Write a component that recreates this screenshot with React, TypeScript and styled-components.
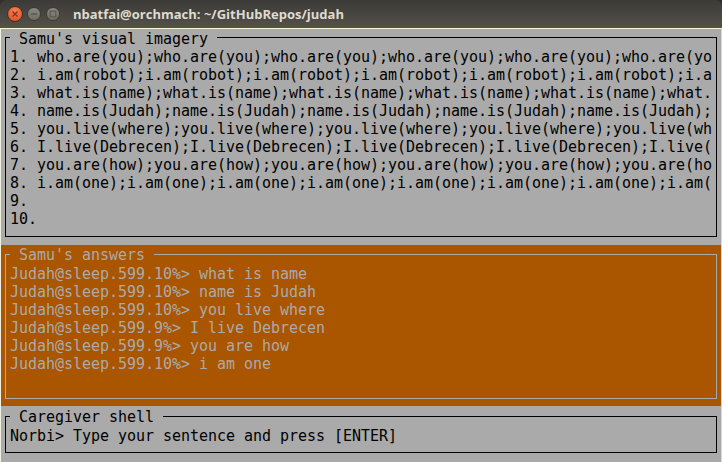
import React from "react";
import styled, { createGlobalStyle } from "styled-components";

const Global = createGlobalStyle`
  html, body { margin: 0; padding: 0; background: #fff; }
  body { width: 722px; height: 462px; overflow: hidden; }
`;

const Win = styled.div`
  width: 722px;
  height: 462px;
  display: flex;
  flex-direction: column;
  background: #2f2e2b;
`;

const TitleBar = styled.div`
  height: 28px;
  flex: none;
  display: flex;
  align-items: center;
  padding-left: 7px;
  gap: 4px;
  background: linear-gradient(#3b3a36, #55524b);
  border-radius: 6px 6px 0 0;
  box-sizing: border-box;
`;

const CloseLight = styled.span`
  width: 16px;
  height: 16px;
  border-radius: 50%;
  box-sizing: border-box;
  display: flex;
  align-items: center;
  justify-content: center;
  background: radial-gradient(circle at 50% 30%, #f4805a, #dc4a20);
  border: 1px solid #47301f;
`;

const GreyLight = styled.span`
  width: 14px;
  height: 14px;
  border-radius: 50%;
  box-sizing: border-box;
  display: flex;
  align-items: center;
  justify-content: center;
  background: linear-gradient(#8a8880, #6f6d66);
  border: 1px solid #3c3b37;

  & + & {
    margin-left: 1px;
  }
`;

const WinTitle = styled.div`
  margin-left: 9px;
  font: 700 13px "Open Sans", "Noto Sans", sans-serif;
  color: #dfdbd2;
  white-space: pre;
`;

const Term = styled.div`
  flex: 1;
  display: flex;
  flex-direction: column;
  border-top: 1px solid #f6f6d8;
  border-left: 1px solid #f0f0e0;
  border-right: 1px solid #d8d8d0;
  font: 15px/18px "DejaVu Sans Mono", monospace;
  letter-spacing: -0.03px;
  min-height: 0;
`;

const Panel = styled.section<{ $h: number; $orange?: boolean; $pt: number }>`
  height: ${(p) => p.$h}px;
  flex: none;
  box-sizing: border-box;
  padding: ${(p) => p.$pt}px 4px 0 4px;
  background: ${(p) => (p.$orange ? "#aa5500" : "#aaaaaa")};
  color: ${(p) => (p.$orange ? "#aaaaaa" : "#000")};
`;

const Frame = styled.div<{ $h: number; $orange?: boolean }>`
  position: relative;
  height: ${(p) => p.$h}px;
  box-sizing: border-box;
  padding: 10px 0 0 4px;
  border: 1px solid ${(p) => (p.$orange ? "#aaaaaa" : "#000")};
`;

const FrameTitle = styled.div<{ $orange?: boolean; $top: number }>`
  position: absolute;
  left: 4px;
  top: ${(p) => p.$top}px;
  padding: 0 9px;
  height: 18px;
  background: ${(p) => (p.$orange ? "#aa5500" : "#aaaaaa")};
  white-space: pre;
`;

const Line = styled.div`
  height: 18px;
  width: 702px;
  white-space: pre;
  overflow: hidden;
`;

const imagery = [
  "1. " + "who.are(you);".repeat(6).slice(0, 75),
  "2. " + "i.am(robot);".repeat(7).slice(0, 75),
  "3. " + "what.is(name);".repeat(6).slice(0, 75),
  "4. " + "name.is(Judah);".repeat(6).slice(0, 75),
  "5. " + "you.live(where);".repeat(5).slice(0, 75),
  "6. " + "I.live(Debrecen);".repeat(5).slice(0, 75),
  "7. " + "you.are(how);".repeat(6).slice(0, 75),
  "8. " + "i.am(one);".repeat(8).slice(0, 75),
  "9.",
  "10.",
];

const answers = [
  "Judah@sleep.599.10%> what is name",
  "Judah@sleep.599.10%> name is Judah",
  "Judah@sleep.599.10%> you live where",
  "Judah@sleep.599.9%> I live Debrecen",
  "Judah@sleep.599.9%> you are how",
  "Judah@sleep.599.10%> i am one",
];

export default function App() {
  return (
    <Win>
      <Global />
      <TitleBar>
        <CloseLight>
          <svg width="8" height="8" viewBox="0 0 8 8">
            <path d="M1.5 1.5L6.5 6.5M6.5 1.5L1.5 6.5" stroke="#8a3015" strokeWidth="1.4" />
          </svg>
        </CloseLight>
        <GreyLight>
          <svg width="8" height="8" viewBox="0 0 8 8">
            <path d="M1 4H7" stroke="#5a5850" strokeWidth="1.5" />
          </svg>
        </GreyLight>
        <GreyLight>
          <svg width="8" height="8" viewBox="0 0 8 8">
            <rect x="1.2" y="1.2" width="5.6" height="5.6" fill="none" stroke="#5a5850" strokeWidth="1.2" />
          </svg>
        </GreyLight>
        <WinTitle>nbatfai@orchmach: ~/GitHubRepos/judah</WinTitle>
      </TitleBar>
      <Term>
        <Panel $h={216} $pt={8}>
          <Frame $h={200}>
            <FrameTitle $top={-8}>Samu's visual imagery</FrameTitle>
            {imagery.map((t) => (
              <Line key={t}>{t}</Line>
            ))}
          </Frame>
        </Panel>
        <Panel $h={161} $orange $pt={9}>
          <Frame $h={145} $orange>
            <FrameTitle $orange $top={-9}>Samu's answers</FrameTitle>
            {answers.map((t) => (
              <Line key={t}>{t}</Line>
            ))}
          </Frame>
        </Panel>
        <Panel $h={56} $pt={10}>
          <Frame $h={37}>
            <FrameTitle $top={-9}>Caregiver shell</FrameTitle>
            <Line>Norbi&gt; Type your sentence and press [ENTER]</Line>
          </Frame>
        </Panel>
      </Term>
    </Win>
  );
}
